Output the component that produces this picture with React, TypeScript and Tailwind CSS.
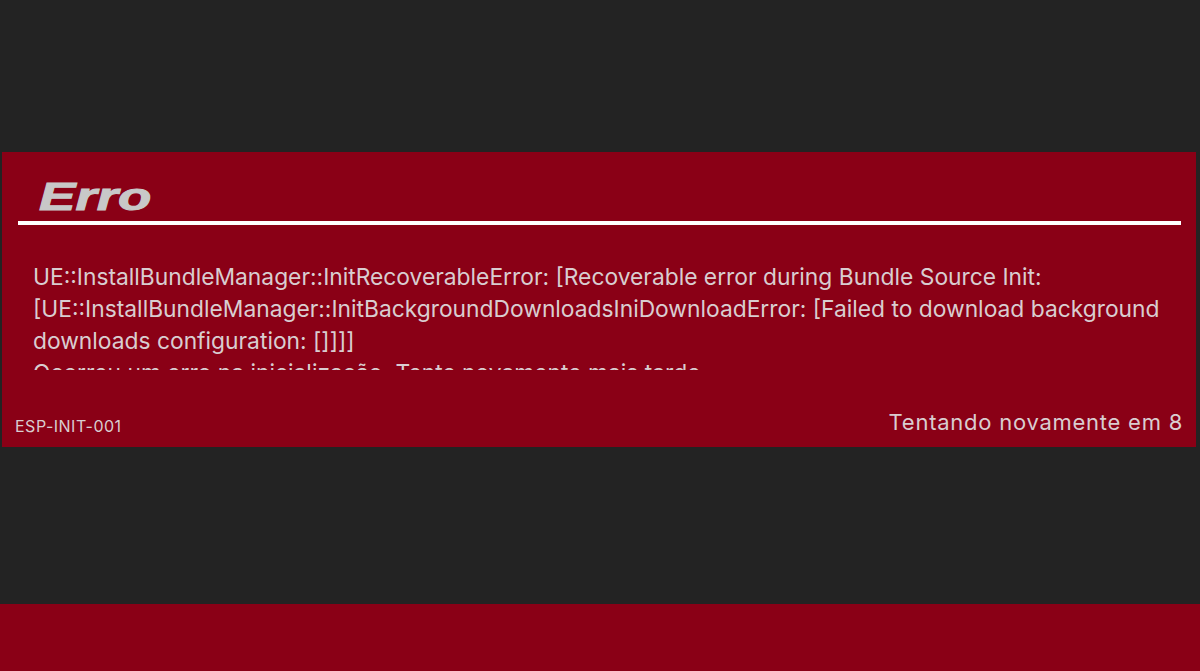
export default function App() {
  return (
    <div className="h-[671px] w-[1200px] bg-[#232323] flex flex-col overflow-hidden" style={{ fontFamily: "Inter, 'Noto Sans', sans-serif" }}>
      <div className="h-[152px] shrink-0" />
      <div className="ml-[2px] mr-[4px] h-[295px] shrink-0 bg-[#8a0016] flex flex-col">
        <div className="pl-[37px] pt-[25px] h-[69px]">
          <span className="inline-block origin-left scale-x-[1.4] text-[39px] leading-[40px] italic font-black text-[#c8c8c8]" style={{ fontFamily: "'Liberation Sans', Arial, sans-serif", WebkitTextStroke: "1px #c8c8c8" }}>Erro</span>
        </div>
        <div className="ml-[16px] mr-[15px] h-[4px] bg-white" />
        <div className="mt-[36px] ml-[31px] mr-[25px] h-[109px] overflow-hidden text-[22.8px] leading-[32px] text-[#d9cdd0]">
          <p>UE::InstallBundleManager::InitRecoverableError: [Recoverable error during Bundle Source Init: [UE::InstallBundleManager::InitBackgroundDownloadsIniDownloadError: [Failed to download background downloads configuration: []]]]</p>
          <p>Ocorreu um erro na inicialização. Tente novamente mais tarde.</p>
        </div>
        <div className="flex items-end justify-between px-[13px] mt-auto pb-[8px]">
          <span className="text-[16px] tracking-[0.5px] text-[#d9cdd0] mb-[1px]">ESP-INIT-001</span>
          <span className="text-[22px] tracking-[0.75px] text-[#d9cdd0]">Tentando novamente em 8</span>
        </div>
      </div>
      <div className="flex-1" />
      <div className="h-[67px] shrink-0 bg-[#8a0016]" />
    </div>
  );
}
